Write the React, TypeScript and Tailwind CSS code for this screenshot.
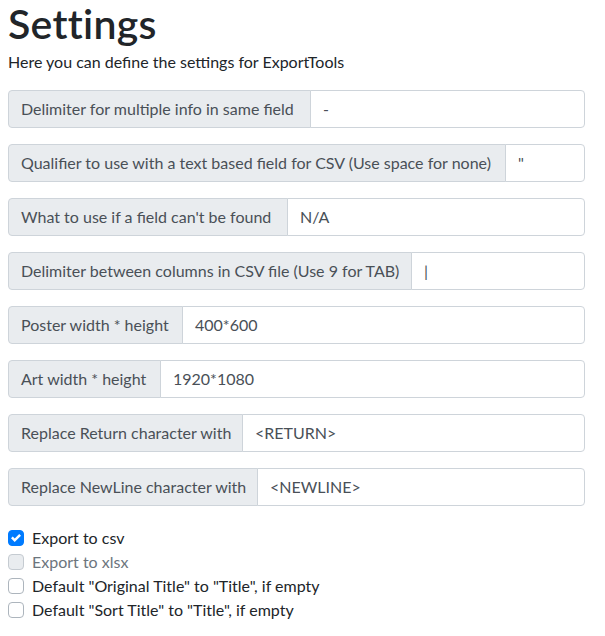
import React from "react";

const rows: { label: string; value: string; w: string }[] = [
  { label: "Delimiter for multiple info in same field", value: "-", w: "w-[303px]" },
  { label: "Qualifier to use with a text based field for CSV (Use space for none)", value: '"', w: "w-[498px]" },
  { label: "What to use if a field can't be found", value: "N/A", w: "w-[280px]" },
  { label: "Delimiter between columns in CSV file (Use 9 for TAB)", value: "|", w: "w-[404px]" },
  { label: "Poster width * height", value: "400*600", w: "w-[175px]" },
  { label: "Art width * height", value: "1920*1080", w: "w-[153px]" },
  { label: "Replace Return character with", value: "<RETURN>", w: "w-[235px]" },
  { label: "Replace NewLine character with", value: "<NEWLINE>", w: "w-[250px]" },
];

function Check({ state, label }: { state: "checked" | "disabled" | "off"; label: string }) {
  return (
    <div className="flex items-center h-6">
      {state === "checked" ? (
        <span className="w-4 h-4 rounded-[4px] bg-[#007bff] border border-[#007bff] flex items-center justify-center">
          <svg width="10" height="10" viewBox="0 0 8 8">
            <path fill="#fff" d="M6.564.75l-3.59 3.612-1.538-1.55L0 4.26l2.974 2.99L8 2.193z" />
          </svg>
        </span>
      ) : state === "disabled" ? (
        <span className="w-4 h-4 rounded-[4px] bg-[#e9ecef] border border-[#c5cbd1]" />
      ) : (
        <span className="w-4 h-4 rounded-[4px] bg-white border border-[#adb5bd]" />
      )}
      <span className={"ml-2 " + (state === "disabled" ? "text-[#6c757d]" : "text-[#212529]")}>{label}</span>
    </div>
  );
}

export default function App() {
  return (
    <div className="px-2 bg-white text-[#212529] text-[16px] leading-6 font-['Lato','Liberation_Sans',sans-serif] w-[593px]">
      <h1 className="text-[41px] leading-[48px] font-semibold mb-[2px] mt-0 tracking-[0.3px]">Settings</h1>
      <p className="mb-4">Here you can define the settings for ExportTools</p>
      {rows.map((r) => (
        <div key={r.label} className="flex h-[38px] mb-4">
          <div className={"shrink-0 flex items-center px-3 bg-[#e9ecef] border border-[#ced4da] rounded-l-[4px] text-[#495057] whitespace-nowrap " + r.w}>
            {r.label}
          </div>
          <div className="flex-1 flex items-center px-3 -ml-px border border-[#ced4da] rounded-r-[4px] text-[#495057] bg-white whitespace-pre">
            {r.value}
          </div>
        </div>
      ))}
      <div className="pt-1">
        <Check state="checked" label="Export to csv" />
        <Check state="disabled" label="Export to xlsx" />
        <Check state="off" label={'Default "Original Title" to "Title", if empty'} />
        <Check state="off" label={'Default "Sort Title" to "Title", if empty'} />
      </div>
    </div>
  );
}
